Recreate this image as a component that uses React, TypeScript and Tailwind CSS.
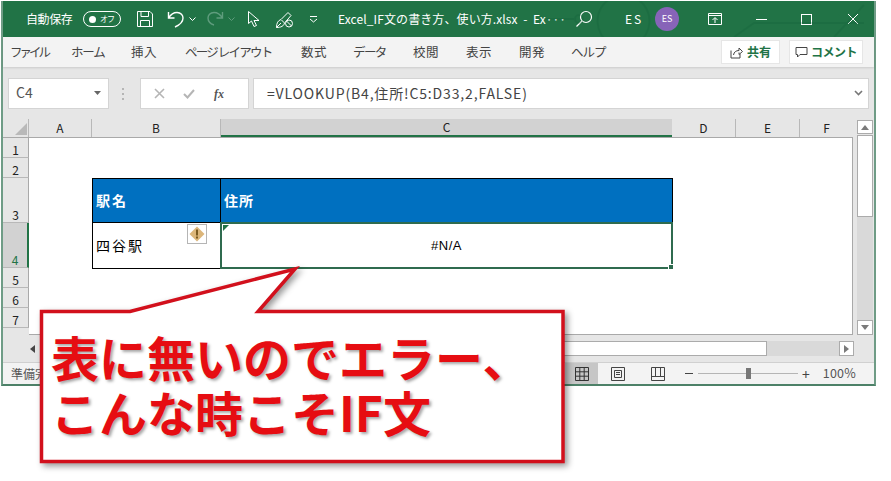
import React from 'react';

const JP = "font-['Noto_Sans_CJK_JP','Noto_Sans',sans-serif]";

const ROWS = [
  { label: '1', h: 'h-[20px]' },
  { label: '2', h: 'h-[20px]' },
  { label: '3', h: 'h-[45px]' },
  { label: '4', h: 'h-[45px]', active: true },
  { label: '5', h: 'h-[20px]' },
  { label: '6', h: 'h-[20px]' },
  { label: '7', h: 'h-[20px]' },
];

const TABS = [
  { label: 'ファイル', cls: 'w-[61px] tracking-[-3px]' },
  { label: 'ホーム', cls: 'w-[60px] tracking-[-1.2px]' },
  { label: '挿入', cls: 'w-[54px] tracking-[0.5px]' },
  { label: 'ページ レイアウト', cls: 'w-[116px] tracking-[-1.8px]' },
  { label: '数式', cls: 'w-[52px] tracking-[0.5px]' },
  { label: 'データ', cls: 'w-[60px] tracking-[-1.6px]' },
  { label: '校閲', cls: 'w-[53px] tracking-[0.5px]' },
  { label: '表示', cls: 'w-[53px] tracking-[0.5px]' },
  { label: '開発', cls: 'w-[52px] tracking-[0.5px]' },
  { label: 'ヘルプ', cls: 'w-[50px] tracking-[-1px]' },
];

const ColHead = ({ label, cls }: { label: string; cls: string }) => (
  <div className={`flex items-center justify-center border-r border-[#b8b8b8] text-[12px] text-[#222] ${cls}`}>{label}</div>
);

const Sheet = () => (
  <div className="flex w-[850px] flex-col">
    {/* column letters */}
    <div className="flex h-[19px] shrink-0 border-b border-[#a9a9a9] bg-[#e6e6e6]">
      <div className="relative w-[26px] border-r border-[#b8b8b8]">
        <svg width="14" height="14" className="absolute left-[11px] top-[3px]"><path d="M13 1V13H1Z" fill="#b9b9b9" /></svg>
      </div>
      <ColHead label="A" cls="w-[63px]" />
      <ColHead label="B" cls="w-[129px]" />
      <div className="flex w-[451px] items-center justify-center border-b-2 border-[#217346] bg-[#d2d2d2] text-[12px] text-[#222]">C</div>
      <ColHead label="D" cls="w-[64px]" />
      <ColHead label="E" cls="w-[64px]" />
      <div className="flex w-[53px] items-center justify-center text-[12px] text-[#222]">F</div>
    </div>
    <div className="flex flex-1 overflow-hidden">
      {/* row numbers */}
      <div className="flex w-[26px] shrink-0 flex-col bg-[#e6e6e6]">
        {ROWS.map((r) => (
          <div
            key={r.label}
            className={`flex shrink-0 items-end justify-center border-b border-[#b8b8b8] text-[12px] leading-[15px] ${r.h} ${
              r.active ? 'border-r-2 border-r-[#217346] bg-[#d2d2d2] text-[#217346]' : 'border-r border-r-[#a9a9a9] text-[#222]'
            }`}
          >
            {r.label}
          </div>
        ))}
      </div>
      {/* cells */}
      <div className="flex-1 border-r border-b border-[#a9a9a9] bg-white">
        <div className="ml-[63px] mt-[40px] grid w-[581px] grid-cols-[129px_452px] grid-rows-[45px_46px]">
          <div className={`flex items-center border border-black bg-[#0070c0] pl-[3px] text-[14px] font-bold tracking-[2px] text-white ${JP}`}>駅名</div>
          <div className={`flex items-center border border-l-0 border-black bg-[#0070c0] pl-[3px] text-[14px] font-bold tracking-[1px] text-white ${JP}`}>住所</div>
          <div className={`relative flex items-center border border-t-0 border-black pl-[3px] text-[14px] tracking-[2px] text-black ${JP}`}>
            四谷駅
            <div className="absolute right-[13px] top-[1px] flex h-[20px] w-[20px] items-center justify-center border border-[#b5b5b5] bg-white">
              <svg width="16" height="16" viewBox="0 0 16 16">
                <path d="M8 0.5 15.5 8 8 15.5 0.5 8Z" fill="#dcb67a" />
                <rect x="7" y="3.5" width="2" height="6" fill="#7a5a20" />
                <rect x="7" y="10.5" width="2" height="2" fill="#7a5a20" />
              </svg>
            </div>
          </div>
          <div className="relative -ml-[1px] -mt-[1px] flex items-center justify-center border-2 border-[#2f6b4f] pt-[1px] text-[13px] tracking-[0.5px] text-black font-['Liberation_Sans',sans-serif]">
            #N/A
            <svg width="6" height="6" className="absolute left-[1px] top-[1px]"><path d="M0 0H6L0 6Z" fill="#217346" /></svg>
            <div className="absolute -bottom-[3px] -right-[3px] h-[6px] w-[6px] border border-white bg-[#2f6b4f]" />
          </div>
        </div>
      </div>
    </div>
  </div>
);

const VScroll = () => (
  <div className="ml-[4px] mt-[1px] flex w-[16px] flex-col">
    <div className="flex h-[14px] items-center justify-center border border-[#ababab] bg-white">
      <svg width="8" height="5"><path d="M4 0 8 5H0Z" fill="#7a7a7a" /></svg>
    </div>
    <div className="mt-[1px] h-[82px] border border-[#ababab] bg-white" />
    <div className="flex-1 bg-[#d9d9d9]" />
    <div className="flex h-[15px] items-center justify-center border border-[#ababab] bg-white">
      <svg width="8" height="5"><path d="M0 0H8L4 5Z" fill="#7a7a7a" /></svg>
    </div>
  </div>
);

const App = () => (
  <div className={`relative h-[481px] w-[891px] overflow-hidden bg-white ${JP}`}>
    <div className="ml-[1px] mt-[1px] flex h-[385px] w-[875px] flex-col border-x-2 border-b-2 border-x-[#6f9c86] border-b-[#4d8168] bg-[#e6e6e6]">
      {/* title bar */}
      <div className="relative flex h-[36px] shrink-0 items-center bg-[#217346] text-white">
        <svg width="330" height="36" className="absolute right-0 top-0 opacity-20" fill="none" stroke="#0d5a33" strokeWidth="2">
          <path d="M0 18H30M80 -6A26 26 0 1 1 79 -6M190 36 210 22H320" />
          <circle cx="35" cy="18" r="4" />
          <path d="M290 36 320 4" />
        </svg>
        <span className="ml-[23px] w-[50px] text-[12px] tracking-[-0.4px]">自動保存</span>
        <div className="ml-[7px] flex h-[16px] w-[38px] items-center rounded-full border border-white pl-[5px]">
          <span className="h-[7px] w-[7px] shrink-0 rounded-full bg-white" />
          <span className="ml-[4px] whitespace-nowrap text-[8px] tracking-[-1px]">オフ</span>
        </div>
        <svg width="18" height="18" viewBox="0 0 18 18" fill="none" stroke="#fff" className="ml-[15px]">
          <path d="M1.5 1.5H14L16.5 4V16.5H1.5ZM5 1.5V6.5H12.5V1.5M4.5 16.5V10.5H13.5V16.5" />
        </svg>
        <svg width="20" height="20" viewBox="0 0 20 20" fill="none" stroke="#fff" strokeWidth="1.4" className="ml-[12px]">
          <path d="M2.5 3V9H8.5M2.5 9C5 5 8 3.5 11 3.5C15 3.5 17 6.5 17 9C17 13 13.5 16 9 18" />
        </svg>
        <svg width="7" height="4" className="ml-[3px]"><path d="M0.5 0.5 3.5 3.5 6.5 0.5" fill="none" stroke="#fff" /></svg>
        <svg width="20" height="20" viewBox="0 0 20 20" fill="none" stroke="#5f9c7d" strokeWidth="1.4" className="ml-[9px]">
          <path d="M17.5 3V9H11.5M17.5 9C15 5 12 3.5 9 3.5C5 3.5 3 6.5 3 9C3 13 6 15 9 16" />
        </svg>
        <svg width="7" height="4" className="ml-[3px]"><path d="M0.5 0.5 3.5 3.5 6.5 0.5" fill="none" stroke="#5f9c7d" /></svg>
        <svg width="14" height="18" viewBox="0 0 14 18" fill="none" stroke="#fff" className="ml-[12px]">
          <path d="M1.5 1.5V13.5L4.5 11 7 16.5 9.5 15.5 7 10.5H12Z" />
        </svg>
        <svg width="19" height="19" viewBox="0 0 19 19" fill="none" stroke="#fff" className="ml-[14px]">
          <path d="M1.5 17.5C1.5 13 3 10.5 6 9.5L9.5 13C9 16 6 17.5 1.5 17.5ZM1.5 17.5 6 13M6.5 9 13 2.5 16 5.5 10 12.5" />
          <circle cx="14" cy="13.5" r="3.5" />
          <path d="M11.5 11 16.5 16" />
        </svg>
        <svg width="9" height="8" viewBox="0 0 9 8" fill="none" stroke="#fff" className="ml-[15px]">
          <path d="M1 1.5H8M1 4 4.5 7 8 4" />
        </svg>
        <span className="ml-[20px] w-[220px] whitespace-nowrap text-[12px] tracking-[0.1px]">Excel_IF文の書き方、使い方.xlsx&nbsp; -&nbsp; Ex···</span>
        <svg width="18" height="18" viewBox="0 0 18 18" fill="none" stroke="#fff" strokeWidth="1.2" className="ml-[17px]">
          <circle cx="11" cy="7" r="5.5" />
          <path d="M7 11 1.5 16.5" />
        </svg>
        <span className="ml-[32px] w-[28px] text-[12px] tracking-[2px]">ES</span>
        <div className="ml-[2px] flex h-[24px] w-[24px] items-center justify-center rounded-full bg-[#8764b8] text-[9px]">ES</div>
        <svg width="14" height="12" viewBox="0 0 14 12" fill="none" stroke="#fff" className="ml-[29px]">
          <path d="M0.5 0.5H13.5V11.5H0.5ZM0.5 2.5H13.5M7 10V5M4.5 7 7 4.5 9.5 7" />
        </svg>
        <span className="ml-[34px] h-[1px] w-[11px] bg-white" />
        <span className="ml-[34px] h-[11px] w-[11px] border border-white" />
        <svg width="12" height="12" className="ml-[35px]" stroke="#fff"><path d="M1 1 11 11M11 1 1 11" /></svg>
      </div>

      {/* ribbon tabs */}
      <div className="flex h-[30px] shrink-0 items-center bg-[#f3f3f3] pl-[7px] shadow-[0_1px_2px_rgba(0,0,0,0.12)]">
        {TABS.map((t) => (
          <span key={t.label} className={`whitespace-nowrap text-[12.5px] text-[#444] ${t.cls}`}>{t.label}</span>
        ))}
        <div className="ml-[100px] flex h-[24px] w-[59px] shrink-0 items-center justify-center gap-[4px] border border-[#e6e6e6] bg-white text-[12px] font-bold text-[#217346]">
          <svg width="13" height="13" viewBox="0 0 13 13" fill="none" stroke="#444"><path d="M1 4.5V12H10V8M3.5 9C4 6 6 4.5 9 4.5V2L12.5 5.5 9 8.5V6.5" /></svg>
          共有
        </div>
        <div className="ml-[9px] flex h-[24px] w-[74px] shrink-0 items-center justify-center gap-[3px] border border-[#e6e6e6] bg-white text-[12px] font-bold tracking-[-0.5px] text-[#217346]">
          <svg width="13" height="13" viewBox="0 0 13 13" fill="none" stroke="#444"><path d="M1 1.5H12V8.5H5L2.5 11V8.5H1Z" /></svg>
          コメント
        </div>
      </div>

      {/* formula bar */}
      <div className="flex h-[52px] shrink-0 items-center pl-[5px] pt-[1px]">
        <div className="flex h-[31px] w-[101px] items-center justify-between border border-[#d4d4d4] bg-white pb-[2px] pl-[7px] pr-[7px] text-[14px] text-[#555]">
          C4
          <svg width="7" height="4"><path d="M0 0H7L3.5 4Z" fill="#666" /></svg>
        </div>
        <div className="ml-[13px] flex w-[5px] flex-col gap-[3px]">
          <span className="h-[2px] w-[2px] bg-[#b5b5b5]" />
          <span className="h-[2px] w-[2px] bg-[#b5b5b5]" />
          <span className="h-[2px] w-[2px] bg-[#b5b5b5]" />
        </div>
        <div className="ml-[13px] flex h-[31px] w-[109px] items-center border border-[#d4d4d4] bg-white pl-[13px]">
          <svg width="11" height="11" stroke="#b5b5b5" strokeWidth="1.6"><path d="M1 1 10 10M10 1 1 10" /></svg>
          <svg width="12" height="10" fill="none" stroke="#b5b5b5" strokeWidth="2" className="ml-[18px]"><path d="M1 5 4.5 8.5 11 1" /></svg>
          <span className="ml-[19px] font-['Liberation_Serif',serif] text-[12px] font-bold italic text-[#555]">fx</span>
        </div>
        <div className="ml-[4px] flex h-[31px] w-[616px] items-center justify-between border border-[#d4d4d4] bg-white pb-[1px] pl-[13px] pr-[5px] text-[14px] tracking-[0.85px] text-[#444]">
          <span className="whitespace-nowrap">=VLOOKUP(B4,住所!C5:D33,2,FALSE)</span>
          <svg width="9" height="6" fill="none" stroke="#777" strokeWidth="1.6"><path d="M1 1 4.5 4.5 8 1" /></svg>
        </div>
      </div>

      {/* sheet + vertical scrollbar */}
      <div className="flex h-[216px] shrink-0">
        <Sheet />
        <VScroll />
      </div>

      {/* horizontal scrollbar */}
      <div className="flex h-[27px] shrink-0 items-center pl-[27px]">
        <svg width="5" height="8"><path d="M5 0V8L0 4Z" fill="#444" /></svg>
        <div className="ml-[6px] h-[15px] w-[726px] border border-[#ababab] bg-white" />
        <div className="h-[15px] w-[72px] bg-[#d9d9d9]" />
        <div className="flex h-[15px] w-[15px] items-center justify-center border border-[#ababab] bg-white">
          <svg width="5" height="8"><path d="M0 0V8L5 4Z" fill="#7a7a7a" /></svg>
        </div>
      </div>

      {/* status bar */}
      <div className="flex flex-1 items-center border-t border-[#d0d0d0] bg-[#f3f3f3] pl-[8px] text-[12px] text-[#555]">
        <span className="w-[554px]">準備完了</span>
        <div className="flex h-full w-[33px] items-center justify-center bg-[#c6c6c6]">
          <svg width="14" height="14" fill="none" stroke="#333"><path d="M.5.5H13.5V13.5H.5ZM.5 4.8H13.5M.5 9.2H13.5M4.8.5V13.5M9.2.5V13.5" /></svg>
        </div>
        <svg width="14" height="14" fill="none" stroke="#444" className="ml-[13px]"><path d="M.5.5H13.5V13.5H.5ZM3.5 3.5H10.5V10.5H3.5ZM5 5.5H9M5 7.5H9" /></svg>
        <svg width="14" height="14" fill="none" stroke="#444" className="ml-[26px]"><path d="M.5.5H13.5V13.5H.5ZM.5 9.5H13.5M4.5.5V9.5M9.5.5V9.5" /></svg>
        <span className="ml-[20px] h-[1px] w-[8px] bg-[#444]" />
        <div className="relative ml-[5px] h-[1px] w-[100px] bg-[#b5b5b5]">
          <div className="absolute left-[48px] -top-[5px] h-[11px] w-[5px] bg-[#777]" />
        </div>
        <span className="ml-[4px] text-[14px] leading-none text-[#444]">+</span>
        <span className="ml-[13px] text-[12.5px] tracking-[0.2px]">100%</span>
      </div>
    </div>

    {/* callout */}
    <div className="absolute left-[39px] top-[266px] h-[200px] w-[530px]">
      <svg width="530" height="200" className="absolute inset-0 drop-shadow-[3px_3px_3px_rgba(0,0,0,0.4)]">
        <path d="M2.5 45.5H91L256 3 219 45.5H524V195.5H2.5Z" fill="#fff" stroke="#d2101c" strokeWidth="3.5" />
      </svg>
      <div className="relative pl-[12px] pt-[63px] text-[48px] font-bold leading-[55px] text-[#e60d12] [text-shadow:2px_2px_3px_rgba(0,0,0,0.35)]">
        <div className="whitespace-nowrap">表に無いのでエラー、</div>
        <div className="whitespace-nowrap">こんな時こそIF文</div>
      </div>
    </div>
  </div>
);

export default App;
